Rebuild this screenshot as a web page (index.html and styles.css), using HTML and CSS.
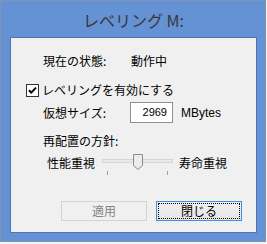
FILE: index.html
```html
<!DOCTYPE html>
<html lang="ja">
<head>
<meta charset="utf-8">
<link rel="stylesheet" href="styles.css">
</head>
<body>
<div class="window">
  <div class="titlebar">レベリング M:</div>
  <div class="client">
    <div class="row status">
      <span class="label-status">現在の状態:</span>
      <span>動作中</span>
    </div>
    <label class="row check">
      <svg class="checkbox" width="13" height="13" viewBox="0 0 13 13">
        <rect x="0.5" y="0.5" width="12" height="12" fill="#fff" stroke="#333"/>
        <path d="M3 6.2 L5.3 8.6 L10 3.6" fill="none" stroke="#000" stroke-width="2"/>
      </svg>
      <span>レベリングを有効にする</span>
    </label>
    <div class="row size">
      <span class="label-size">仮想サイズ:</span>
      <span class="input">2969</span>
      <span class="unit">MBytes</span>
    </div>
    <div class="row policy">再配置の方針:</div>
    <div class="row slider-row">
      <span class="slider-label left">性能重視</span>
      <svg class="slider" width="72" height="22" viewBox="0 0 72 22">
        <rect x="0.5" y="5.5" width="70" height="3" fill="#e7eaea" stroke="#d6d6d6"/>
        <path d="M31.5 0.5 H40.5 V11.5 L36 15.5 L31.5 11.5 Z" fill="#ececec" stroke="#8a8a8a"/>
        <line x1="5.5" y1="17" x2="5.5" y2="21" stroke="#a0a0a0"/>
        <line x1="65.5" y1="17" x2="65.5" y2="21" stroke="#a0a0a0"/>
      </svg>
      <span class="slider-label">寿命重視</span>
    </div>
    <div class="row buttons">
      <button class="btn disabled" disabled>適用</button>
      <button class="btn focused"><span class="focus">閉じる</span></button>
    </div>
  </div>
</div>
</body>
</html>
```
FILE: styles.css
```css
html, body {
  margin: 0;
  padding: 0;
  background: #f4f4f4;
}
body {
  width: 267px;
  height: 244px;
  font-family: "Noto Sans CJK JP", "Noto Sans", sans-serif;
  font-size: 12px;
  line-height: 14px;
  color: #000;
}
.window {
  box-sizing: border-box;
  width: 266px;
  height: 242px;
  border: 1px solid #7d94b4;
  background: #6592d5;
  padding: 0 8px 8px 9px;
  display: flex;
  flex-direction: column;
}
.titlebar {
  height: 36px;
  display: flex;
  align-items: center;
  justify-content: center;
  font-size: 16px;
  color: #383838;
  padding-top: 1px;
  box-sizing: border-box;
}
.client {
  flex: 1;
  background: #f0f0f0;
  border: 1px solid #4e74b3;
  display: flex;
  flex-direction: column;
  padding-top: 16px;
}
.row {
  display: flex;
  align-items: center;
}
.status {
  padding-left: 32px;
  height: 14px;
}
.label-status {
  width: 88px;
}
.check {
  margin-top: 15px;
  padding-left: 15px;
  height: 14px;
}
.checkbox {
  margin-right: 3px;
  flex: none;
}
.size {
  margin-top: 5px;
  padding-left: 32px;
  height: 21px;
}
.label-size {
  width: 87px;
}
.input {
  box-sizing: border-box;
  width: 43px;
  height: 21px;
  background: #fff;
  border: 1px solid #8e8f8f;
  font-family: "Liberation Sans", sans-serif;
  font-size: 11px;
  text-align: right;
  padding-right: 5px;
  line-height: 19px;
}
.unit {
  margin-left: 8px;
  font-family: "Liberation Sans", sans-serif;
  font-size: 12px;
}
.policy {
  margin-top: 11px;
  padding-left: 32px;
  height: 14px;
}
.slider-row {
  margin-top: 6px;
  padding-left: 36px;
  align-items: flex-start;
  height: 22px;
}
.slider-label {
  line-height: 15px;
  margin-top: 1px;
}
.slider-label.left {
  width: 55px;
}
.slider {
  display: block;
  margin-right: 5px;
}
.buttons {
  margin-top: 25px;
  padding-left: 50px;
  gap: 9px;
}
.btn {
  box-sizing: border-box;
  width: 86px;
  height: 20px;
  margin: 0;
  padding: 0;
  font-family: "Noto Sans CJK JP", sans-serif;
  font-size: 12px;
  line-height: 14px;
  border-radius: 0;
  display: flex;
  align-items: center;
  justify-content: center;
}
.btn.disabled {
  background: #f0f0f0;
  border: 1px solid #d3d3d3;
  color: #838383;
}
.btn.focused {
  background: linear-gradient(#f0f0f0, #e5e5e5);
  border: 1px solid #3c8ee6;
  color: #000;
  padding: 1px;
}
.focus {
  box-sizing: border-box;
  width: 100%;
  height: 100%;
  border: 1px dotted #000;
  display: flex;
  align-items: center;
  justify-content: center;
}
```
